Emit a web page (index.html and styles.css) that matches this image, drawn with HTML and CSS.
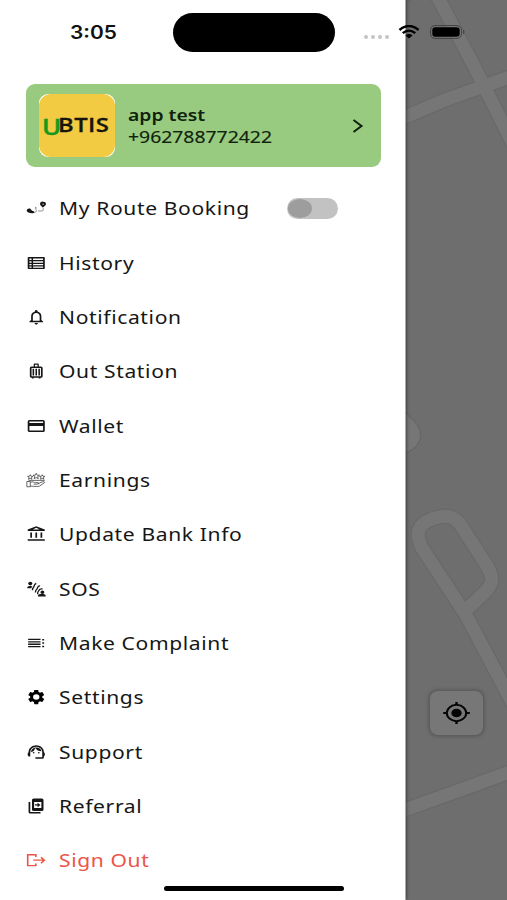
FILE: index.html
```html
<!DOCTYPE html>
<html lang="en">
<head>
<meta charset="utf-8">
<title>Menu</title>
<link rel="stylesheet" href="styles.css">
</head>
<body>
<div class="screen">
  <svg class="map" viewBox="0 0 102 900" fill="none">
    <g class="road-edge">
      <path d="M-5 119 40 100 107 76M28-12 70 68 110 148M-5 -2 6 -8M-6 812 108 771M108 704 61 615 17 548C9 532 14 524 27 519 43 514 48 516 55 524L82 566C89 578 88 584 80 592L59 612"/>
    </g>
    <path class="blob" d="M-2 409 6 418Q15 425 16 436 14 449-2 454Z"/>
    <g class="road">
      <path d="M-5 119 40 100 107 76M28-12 70 68 110 148M-6 812 108 771M108 704 61 615 17 548C9 532 14 524 27 519 43 514 48 516 55 524L82 566C89 578 88 584 80 592L59 612"/>
    </g>
  </svg>
  <button class="locate" aria-label="Locate">
    <svg viewBox="0 0 24 24" preserveAspectRatio="none"><circle cx="12" cy="12" r="4.300"/><path d="M20.9 11A9 9 0 0 0 13 3.100V1h-2v2.100A9 9 0 0 0 3.100 11H1v2h2.100A9 9 0 0 0 11 20.900V23h2v-2.100a9 9 0 0 0 7.900-7.900H23v-2zM12 19.200a7.200 7.200 0 1 1 0-14.400 7.200 7.200 0 0 1 0 14.400z"/></svg>
  </button>

  <aside class="drawer">
    <section class="profile">
      <div class="avatar"><div class="logo"><span class="logo-u">U</span><span class="logo-rest">BTIS</span></div></div>
      <div class="who">
        <div class="name"><span>app test</span></div>
        <div class="phone"><span>+962788772422</span></div>
      </div>
      <svg class="chevron" viewBox="0 0 12 16"><path d="M1.500 2 9.500 8 1.500 14"/></svg>
    </section>
    <nav class="menu">
      <div class="item"><svg class="icon" viewBox="0 0 24 24" preserveAspectRatio="none"><path fill-rule="evenodd" d="M20 3.500a3.500 3.500 0 0 0-3.600 3.300c0 2 2.400 3.500 3.400 4.700 1-1.200 3.600-2.600 3.600-4.700A3.400 3.400 0 0 0 20 3.500zm0 2.500a.8.800 0 1 1 0 1.600.8.800 0 0 1 0-1.600z"/><path d="M1.500 13.500c1.500-1.400 4-1 4.600.8.300 1.200 1.900 1.500 3 1.900 1 .5.900 2.300-.2 2.600-2.500.7-6.300-.1-7.600-2-.6-.9-.5-2.500.2-3.300z"/><path class="thin faint" d="M8.500 17.500c2 1 4-.2 3.500-2.500-.5-1.700-1.500-2.500-.9-4l1.600 1.200M14 16h4.500c2.500 0 1.500-2.500 1.500-4"/></svg><span class="label">My Route Booking</span><span class="switch"></span></div>
      <div class="item"><svg class="icon" viewBox="0 0 24 24" preserveAspectRatio="none"><path fill-rule="evenodd" d="M3 4h18q1 0 1 1v14q0 1-1 1H3q-1 0-1-1V5q0-1 1-1zM4 6v2h2.500V6zm4.300 0v2H20V6zM4 9.800v1.700h2.500V9.800zm4.300 0v1.700H20V9.800zM4 13.200v1.700h2.500v-1.700zm4.300 0v1.700H20v-1.700zM4 16.600v1.600h2.500v-1.600zm4.300 0v1.600H20v-1.600z"/></svg><span class="label">History</span></div>
      <div class="item"><svg class="icon" viewBox="0 0 24 24" preserveAspectRatio="none"><path d="M12 22c1.100 0 2-.9 2-2h-4c0 1.100.9 2 2 2zm6-6v-5c0-3.070-1.630-5.640-4.500-6.320V4a1.500 1.500 0 0 0-3 0v.68C7.640 5.360 6 7.920 6 11v5l-2 2v1h16v-1zm-2 1H8v-6c0-2.480 1.510-4.500 4-4.500s4 2.020 4 4.500z"/></svg><span class="label">Notification</span></div>
      <div class="item"><svg class="icon" viewBox="0 0 24 24" preserveAspectRatio="none"><path fill-rule="evenodd" d="M17.500 6H15V3c0-.6-.4-1-1-1h-4c-.6 0-1 .4-1 1v3H6.500a2 2 0 0 0-2 2v11c0 1.100.9 2 2 2H7v1h2v-1h6v1h2v-1h.5a2 2 0 0 0 2-2V8a2 2 0 0 0-2-2zM10.500 3.500h3V6h-3zM6.500 8h11v11h-11z"/><path d="M7.700 9h1.800v9H7.700zm3.400 0h1.800v9h-1.800zm3.400 0h1.800v9h-1.800z"/></svg><span class="label">Out Station</span></div>
      <div class="item"><svg class="icon" viewBox="0 0 24 24" preserveAspectRatio="none"><path d="M20 4H4a2 2 0 0 0-2 2v12c0 1.100.9 2 2 2h16a2 2 0 0 0 2-2V6a2 2 0 0 0-2-2zm0 14H4v-6h16zm0-10H4V6h16z"/></svg><span class="label">Wallet</span></div>
      <div class="item"><svg class="icon soft" viewBox="0 0 24 24" preserveAspectRatio="none"><path class="thin" d="m12 3 1 2.500 2.800.2-2.200 1.800.8 2.700L12 8.800l-2.400 1.400.8-2.700-2.200-1.800 2.800-.2zM5 5l.9 2 2.200.2-1.700 1.500.6 2.300L5 9.800 3 11l.6-2.300L1.900 7.200 4.100 7zM19 5l.9 2 2.200.2-1.700 1.500.6 2.300-2-1.200-2 1.200.6-2.300-1.700-1.500 2.200-.2zM1 14h4v7H1zm4 1c3-1.500 4.500.5 6 .5h3c1.500.2 1 2-.5 2H9m5-.5 5-2.500c2-.7 4 .3 2 1.500L16 20c-2 1-5 .8-11 0M3 12.500h19"/></svg><span class="label">Earnings</span></div>
      <div class="item"><svg class="icon" viewBox="0 0 24 24" preserveAspectRatio="none"><path d="M7 10H5v7h2zm6 0h-2v7h2zm9 9H2v2h20zm-3-9h-2v7h2zM12 3.800 16 6H8zM12 1.500 2 6v2h20V6z"/></svg><span class="label">Update Bank Info</span></div>
      <div class="item"><svg class="icon" viewBox="0 0 24 24" preserveAspectRatio="none"><circle cx="5" cy="4.800" r="2.400"/><path d="M1.500 11V9.700C1.500 8.300 4 8 5.500 8l2 .5L6 11zM21.500 16.200a2.300 2.300 0 1 0-4.600 0 2.300 2.300 0 0 0 4.600 0zM14 22v-1.300c0-1.400 2.500-2 4.500-2s4.500.6 4.500 2V22z"/><path class="bold" d="M12 4.500c-3 1.500-2 3.500-3 5s-1.500 2-1.500 4M16.500 8c-3.500-.5-2.500 3-4 4.500s-1.500 2.500-1.500 4M19.500 12c-4-1-4 1.500-5 3s-1.500 2.500-.5 4"/></svg><span class="label">SOS</span></div>
      <div class="item"><svg class="icon" viewBox="0 0 24 24" preserveAspectRatio="none"><path d="M2.500 6.200h14.500v1.700H2.500zm0 3.300h14.500v1.700H2.500zm0 3.300h14.500v1.700H2.500zm0 3.300h14.500v1.700H2.500zM19 6.500h2.200v2H19zm0 4.500h2.200v2H19zm0 4.500h2.200v2H19z"/></svg><span class="label">Make Complaint</span></div>
      <div class="item"><svg class="icon" viewBox="0 0 24 24" preserveAspectRatio="none"><path class="gear" d="M19.500 12c0-.34-.03-.66-.07-1l2.110-1.630c.19-.15.24-.42.120-.64l-2-3.460c-.12-.22-.39-.31-.61-.22l-2.490 1c-.52-.39-1.060-.73-1.690-.98l-.37-2.650A.5.500 0 0 0 14 2h-4c-.25 0-.46.180-.5.420l-.37 2.650c-.63.250-1.170.590-1.690.980l-2.490-1c-.22-.09-.49 0-.61.220l-2 3.460c-.13.220-.07.490.120.640L4.570 11a8 8 0 0 0 0 2l-2.110 1.630c-.19.150-.25.420-.12.640l2 3.460c.120.220.390.300.610.220l2.490-1.010c.52.400 1.060.740 1.690.990l.37 2.650c.04.240.25.420.500.420h4c.25 0 .46-.18.500-.42l.37-2.650c.63-.26 1.170-.59 1.690-.99l2.490 1.010c.22.080.49 0 .61-.22l2-3.460c.12-.22.070-.49-.12-.64L19.430 13c.04-.34.070-.67.070-1zM12 15.900a3.900 3.900 0 1 1 0-7.800 3.900 3.900 0 0 1 0 7.800z"/></svg><span class="label">Settings</span></div>
      <div class="item"><svg class="icon" viewBox="0 0 24 24" preserveAspectRatio="none"><path d="M21 12.220C21 6.730 16.740 3 12 3c-4.690 0-9 3.650-9 9.280-.6.340-1 .98-1 1.720v2c0 1.100.9 2 2 2h1v-6.100a7 7 0 0 1 14 0V19h-8v2h8a2 2 0 0 0 2-2v-1.220c.59-.31 1-.92 1-1.640v-2.300c0-.7-.41-1.310-1-1.620z"/><circle cx="9" cy="13" r="1"/><circle cx="15" cy="13" r="1"/><path d="M18 11.030A6.040 6.040 0 0 0 12.050 6c-3.030 0-6.290 2.510-6.030 6.450a8.070 8.070 0 0 0 4.860-5.890c1.310 2.630 4 4.440 7.120 4.470z"/></svg><span class="label">Support</span></div>
      <div class="item"><svg class="icon" viewBox="0 0 24 24" preserveAspectRatio="none"><path fill-rule="evenodd" d="M5 6.500H3V20c0 1.100.9 2 2 2h12v-2H5zM9 2h9.500a2 2 0 0 1 2 2v12.500a2 2 0 0 1-2 2H9a2 2 0 0 1-2-2V4a2 2 0 0 1 2-2zM9.500 6.500v8h8.500v-8z"/><path d="M10.500 9.600h3V7.500l3.500 3-3.500 3v-2.100h-3z"/></svg><span class="label">Referral</span></div>
      <div class="item signout"><svg class="icon" viewBox="0 0 24 24" preserveAspectRatio="none"><path class="line" d="M11.500 8V5H2v14.500h9.500v-3M8.500 12.200H21.500M17.500 8.200l4 4-4 4"/></svg><span class="label">Sign Out</span></div>
    </nav>
  </aside>

  <header class="status">
    <span class="time">3:05</span>
    <span class="island"></span>
    <span class="signal"><i></i><i></i><i></i><i></i></span>
    <svg class="wifi" viewBox="0 0 22 14" fill="none"><path d="M1.500 5C7-.3 15-.3 20.500 5M4.800 8.200c3.700-3.400 8.700-3.400 12.400 0"/><path class="solid" d="M7.500 10.500c2-2 5-2 7 0L11 13.500z"/></svg>
    <svg class="battery" viewBox="0 0 35 14"><rect class="case" x=".5" y=".5" width="31" height="13" rx="4.500"/><rect x="2.300" y="2.300" width="27.400" height="9.400" rx="3"/><path class="tip" d="M33 4.500q3 2.500 0 5z"/></svg>
  </header>
  <div class="home"></div>
</div>
</body>
</html>
```
FILE: styles.css
```css
* { box-sizing: border-box; }
body { margin: 0; background: #fff; font-family: "Noto Sans", "Open Sans", sans-serif; color: #161616; }
.screen { position: relative; width: 507px; height: 900px; overflow: hidden; background: #6e6e6e; }

.map { position: absolute; right: 0; top: 0; width: 102px; height: 900px; }
.road-edge path { stroke: #696969; stroke-width: 15.500; }
.road path { stroke: #767676; stroke-width: 13; }
.blob { fill: #767676; stroke: #686868; stroke-width: 1.500; }

.locate { position: absolute; left: 430px; top: 691px; width: 53px; height: 44px; padding: 0; display: grid; place-items: center; border: 0; border-radius: 8px; background: #777; box-shadow: 0 0 3px 1.500px #5c5c5c; }
.locate svg { width: 29px; height: 24px; fill: #050505; }

.drawer { position: relative; width: 406px; height: 900px; padding: 84px 25px 0 26px; background: #fff; border-right: 1px solid #aaa; box-shadow: 1px 0 3px rgba(0,0,0,.4); }
.profile { display: flex; align-items: center; height: 83px; width: 355px; padding: 0 17px 0 13px; border-radius: 9px; background: #98cb80; }
.avatar { flex: none; width: 76px; height: 63px; border-radius: 9px; background: #fff; overflow: hidden; display: grid; }
.logo { display: flex; align-items: center; padding-left: 3px; border-radius: 12px; background: #f2cb43; font: 600 20px/24px "Open Sans", sans-serif; color: #16160c; }
.logo-u { flex: none; width: 15.500px; color: #16991c; font-size: 22px; -webkit-text-stroke: .4px #16991c; transform: scaleX(1.180); transform-origin: left; }
.logo-rest { position: relative; top: -1px; letter-spacing: .4px; -webkit-text-stroke: .3px #16160c; transform: scaleX(1.190); transform-origin: left; }
.who { flex: 1; margin-left: 13px; white-space: nowrap; font-size: 16px; line-height: 22px; color: #10220c; }
.name span, .phone span { display: inline-block; transform: scaleX(1.210); transform-origin: left; }
.name { font-weight: 600; }
.phone { -webkit-text-stroke: .15px #10220c; }
.chevron { width: 12px; height: 16px; fill: none; stroke: #10200c; stroke-width: 2; }

.menu { margin-top: 14.300px; }
.item { display: flex; align-items: center; height: 54.330px; }
.icon { flex: none; width: 20.500px; height: 18px; fill: #161616; }
.thin { fill: none; stroke: #222; stroke-width: 1; }
.faint { opacity: .6; }
.soft { opacity: .85; }
.bold { fill: none; stroke: #161616; stroke-width: 1.600; }
.gear { fill: #000; transform: scale(.95); transform-origin: 12px 12px; }
.line { fill: none; stroke: #ec5448; stroke-width: 1.900; }
.label { width: 228px; margin-left: 12.500px; font-size: 17.500px; line-height: 24px; letter-spacing: .52px; white-space: nowrap; transform: scaleX(1.203); transform-origin: left; }
.switch { flex: none; width: 51px; height: 21px; border-radius: 11px; background: #c2c2c2; }
.switch::before { content: ""; display: block; width: 24px; height: 19px; margin: 1px; border-radius: 50%; background: #9d9d9d; }
.signout { color: #ec5448; }

.status { position: absolute; inset: 0 0 auto; height: 64px; display: flex; align-items: center; padding-left: 70px; }
.time { width: 103px; padding-top: 1px; font: 600 18px/22px Inter, sans-serif; transform: scaleX(1.160); transform-origin: left; color: #111; }
.island { width: 162px; height: 39px; border-radius: 20px; background: #000; }
.signal { display: flex; gap: 3px; margin: 9px 0 0 29px; }
.signal i { width: 4px; height: 4px; border-radius: 50%; background: #c4c4c4; }
.wifi { width: 22px; height: 14px; margin-left: 9px; stroke: #000; stroke-width: 2.500; }
.wifi .solid { fill: #000; stroke: none; }
.battery { width: 35px; height: 14px; margin-left: 10px; fill: #000; }
.battery .case { fill: none; stroke: #444; }
.battery .tip { fill: #444; }
.home { position: absolute; left: 164px; top: 886px; width: 180px; height: 5px; border-radius: 3px; background: #000; }
```
